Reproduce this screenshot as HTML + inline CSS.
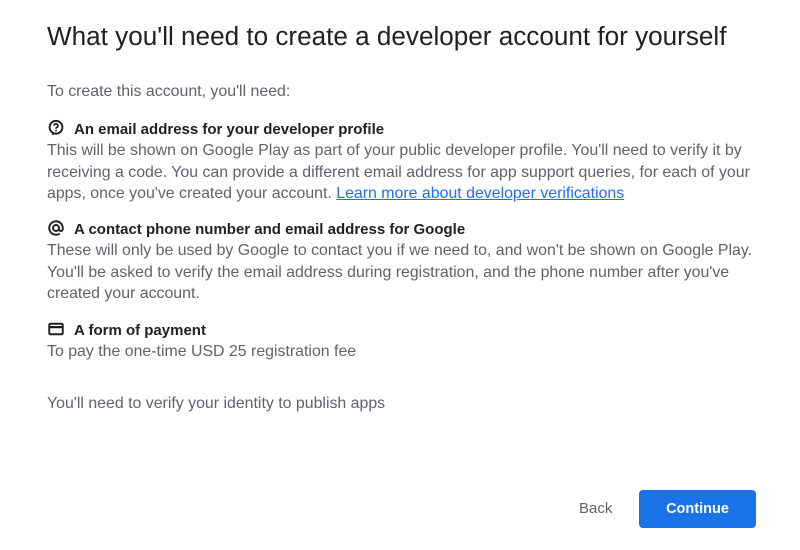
<!DOCTYPE html>
<html><head><meta charset="utf-8"><style>
body{margin:0;width:800px;height:550px;background:#fff;font-family:"Liberation Sans",Arial,sans-serif;position:relative;overflow:hidden}
.t{position:absolute;left:47px;white-space:nowrap}
h1{position:absolute;left:47px;top:21px;margin:0;font-size:26.1px;font-weight:400;color:#202124;white-space:nowrap}
.p{color:#5f6368;font-size:15.9px;line-height:21.5px}
.h{color:#202124;font-size:15px;font-weight:bold;line-height:20px}
.h svg{vertical-align:-3px;margin-right:9px}
a{color:#1a73e8}
.back{position:absolute;left:579px;top:500px;color:#5f6368;font-size:15px}
.btn{position:absolute;left:639px;top:490px;width:117px;height:38px;background:#1a73e8;border-radius:4px;color:#fff;font-size:14.5px;font-weight:bold;text-align:center;line-height:38px}
</style></head><body>
<h1>What you'll need to create a developer account for yourself</h1>
<div class="t p" style="top:81px">To create this account, you'll need:</div>
<div class="t h" style="top:119px"><svg width="18" height="18" viewBox="0 0 24 24"><circle cx="12" cy="11" r="8.5" fill="none" stroke="#202124" stroke-width="2.6"/><path d="M9.5 9a2.5 2.5 0 1 1 3.5 2.3c-.8.4-1 .9-1 1.7" fill="none" stroke="#202124" stroke-width="2.3"/><circle cx="12" cy="15.5" r="1.2" fill="#202124"/><path d="M8 18l-2 4 5-2z" fill="#202124"/></svg>An email address for your developer profile</div>
<div class="t p" style="top:140px">This will be shown on Google Play as part of your public developer profile. You'll need to verify it by<br>receiving a code. You can provide a different email address for app support queries, for each of your<br>apps, once you've created your account. <a href="#">Learn more about developer verifications</a></div>
<div class="t h" style="top:219px"><svg width="18" height="18" viewBox="0 0 24 24"><path d="M16 12a4 4 0 1 1-4-4 4 4 0 0 1 4 4v1.5a2.5 2.5 0 0 0 5 0V12a9 9 0 1 0-4 7.5" fill="none" stroke="#202124" stroke-width="2.6"/></svg>A contact phone number and email address for Google</div>
<div class="t p" style="top:240px">These will only be used by Google to contact you if we need to, and won't be shown on Google Play.<br>You'll be asked to verify the email address during registration, and the phone number after you've<br>created your account.</div>
<div class="t h" style="top:320px"><svg width="18" height="18" viewBox="0 0 24 24"><rect x="3" y="5" width="18" height="14" rx="1.5" fill="none" stroke="#202124" stroke-width="2.6"/><rect x="3" y="8" width="18" height="3" fill="#202124"/></svg>A form of payment</div>
<div class="t p" style="top:341px">To pay the one-time USD 25 registration fee</div>
<div class="t p" style="top:393px">You'll need to verify your identity to publish apps</div>
<div class="back">Back</div>
<div class="btn">Continue</div>
</body></html>
